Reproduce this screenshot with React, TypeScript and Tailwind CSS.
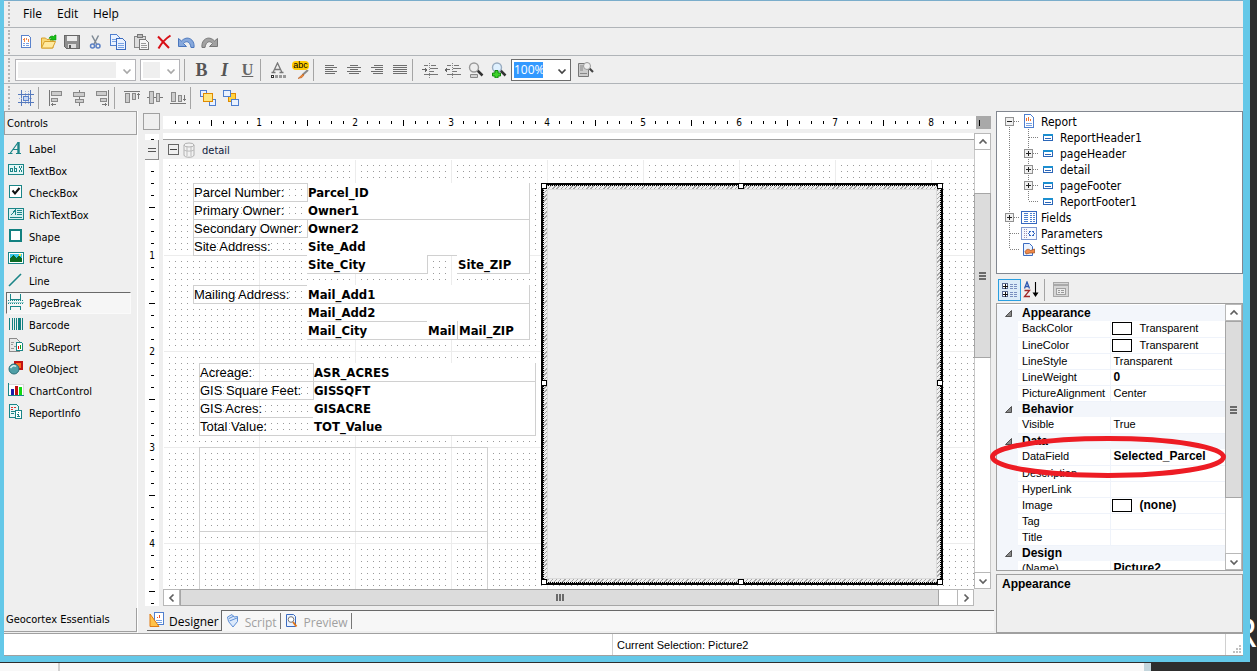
import { clsx } from "clsx";
import type { ReactNode } from "react";

/* ---------- small drawing helpers ---------- */

function Svg({ children, w = 16, h = 16 }: { children: ReactNode; w?: number; h?: number }) {
  return (
    <svg width={w} height={h} viewBox={`0 0 ${w} ${h}`} fill="none" className="shrink-0" shapeRendering="crispEdges" aria-hidden="true">
      {children}
    </svg>
  );
}

function Chevron({ dir, className }: { dir: "up" | "down" | "left" | "right"; className?: string }) {
  const d = {
    up: "M1.5 6.5 5 3l3.5 3.5",
    down: "M1.5 3.5 5 7l3.5-3.5",
    left: "M6.5 1.5 3 5l3.5 3.5",
    right: "M3.5 1.5 7 5 3.5 8.5",
  }[dir];
  return (
    <svg width="10" height="10" viewBox="0 0 10 10" fill="none" stroke="currentColor" strokeWidth="1.7" className={className} aria-hidden="true">
      <path d={d} />
    </svg>
  );
}

const icons = {
  newDoc: (
    <Svg>
      <path d="M3.5 1.5h7l2 2v10h-9z" fill="#fff" stroke="#5b83cc" />
      <path d="M5 5.500h2M6.500 4v4M8.500 4v2M10.500 5v3" stroke="#f0864a" />
      <path d="M5 9.5h2M8 9.5h3M5 11.5h2M8 11.5h3" stroke="#7aa0e0" />
    </Svg>
  ),
  open: (
    <svg width="18" height="16" viewBox="0 0 18 16" aria-hidden="true">
      <path d="M1.5 14V4h4l1.500 1.500h6V14z" fill="#f8d878" stroke="#d8a12c" />
      <path d="M1.500 14 4.500 7.500h11L12.500 14z" fill="#ffeaa0" stroke="#d8a12c" />
      <path d="M9 4.500C10 2 12 1.500 13.500 2.500L15 1h1v5h-6l1.800-1.500C11 4 10 4 9 4.500z" fill="#18c018" stroke="#0a8f0a" strokeWidth=".6" />
    </svg>
  ),
  save: (
    <Svg>
      <path d="M.5 1.500h15v13h-13l-2-2z" fill="#8e8e8e" stroke="#666" />
      <path d="M3 2h10v5H3z" fill="#ececec" />
      <path d="M4 10h8v4H4z" fill="#ddd" />
      <path d="M5 11h2v3H5z" fill="#555" />
    </Svg>
  ),
  cut: (
    <svg width="16" height="16" viewBox="0 0 16 16" fill="none" aria-hidden="true">
      <path d="M5 1.500 9.500 10M11.500 1.500 7 10" stroke="#7d8894" strokeWidth="1.500" />
      <circle cx="5.500" cy="12" r="2" stroke="#5b80c4" strokeWidth="1.500" />
      <circle cx="11" cy="12" r="2" stroke="#5b80c4" strokeWidth="1.500" />
    </svg>
  ),
  copy: (
    <Svg>
      <path d="M.5.5h6l3 3v8h-9z" fill="#eaf2ff" stroke="#4f7fcf" />
      <path d="M6.500 4.500h6l3 3v8h-9z" fill="#eaf2ff" stroke="#3b6bc0" />
      <path d="M2 5.500h4M2 7.500h4M8 9.500h6M8 11.500h6M8 13.500h6" stroke="#7aa3e4" />
    </Svg>
  ),
  paste: (
    <Svg>
      <path d="M1.500 2.500h11v11h-11z" fill="#ddd" stroke="#888" />
      <path d="M4.500.5h5v3h-5z" fill="#bbb" stroke="#777" />
      <path d="M6.500 5.500h6l3 3v7h-9z" fill="#f6f6f6" stroke="#777" />
      <path d="M8 9.500h5M8 11.500h6M8 13.500h6" stroke="#999" />
    </Svg>
  ),
  remove: (
    <svg width="16" height="16" viewBox="0 0 16 16" aria-hidden="true">
      <path d="M2 2.500 13 14M14.500 1.500C9 5 5 10 2.500 14.500" stroke="#d80f16" strokeWidth="2" fill="none" />
    </svg>
  ),
  undo: (
    <svg width="17" height="14" viewBox="0 0 17 14" aria-hidden="true">
      <path d="M.5 3.500v8h8L5.500 8.500C8 5.500 12 6 13 12.500h3C17 4 9 0 3.500 6z" fill="#86a8dc" stroke="#4a76bd" />
    </svg>
  ),
  redo: (
    <svg width="17" height="14" viewBox="0 0 17 14" aria-hidden="true">
      <path d="M16.500 3.500v8h-8l3-3C9 5.500 5 6 4 12.500H1C0 4 8 0 13.500 6z" fill="#a2a2a2" stroke="#777" />
    </svg>
  ),
  fontColor: (
    <Svg w={18} h={16}>
      <path d="M4 10.500 8.500 1 13 10.500M6 7.500h5M2.500 10.500h4M10.500 10.500h4" stroke="#777" strokeWidth="1.300" shapeRendering="auto" />
      <path d="M2.500 13.500h2v2h-2z" fill="#fff" stroke="#333" />
      <path d="M6 13h3v3H6zM10 13h3v3h-3zM14 13h3v3h-3z" fill="#999" />
    </Svg>
  ),
  alignLeft: <Svg><path d="M2 3.500h9M2 5.500h12M2 7.500h8M2 9.500h12M2 11.500h10" stroke="#6e6e6e" /></Svg>,
  alignCenter: <Svg><path d="M4 3.500h8M1 5.500h14M4 7.500h8M1 9.500h14M3 11.500h10" stroke="#6e6e6e" /></Svg>,
  alignRight: <Svg><path d="M5 3.500h9M2 5.500h12M6 7.500h8M2 9.500h12M4 11.500h10" stroke="#6e6e6e" /></Svg>,
  justify: <Svg><path d="M1 3.500h14M1 5.500h14M1 7.500h14M1 9.500h14M1 11.500h14" stroke="#6e6e6e" /></Svg>,
  indent: (
    <Svg>
      <path d="M7.500 1v15" stroke="#888" strokeDasharray="1 1" />
      <path d="M9 3.500h5M8 6.500h8M8 9.500h4M2 12.500h14M2 3.500h4" stroke="#777" />
      <path d="M0 7.500h5M3.500 5.500v4M4.500 6.500v2" stroke="#666" />
    </Svg>
  ),
  outdent: (
    <Svg>
      <path d="M7.500 1v15" stroke="#888" strokeDasharray="1 1" />
      <path d="M9 3.500h5M8 6.500h8M8 9.500h4M2 12.500h14M2 3.500h4" stroke="#777" />
      <path d="M0 7.500h5M1.500 5.500v4M.5 6.500v2" stroke="#666" />
    </Svg>
  ),
  zoomOut: (
    <svg width="17" height="16" viewBox="0 0 17 16" fill="none" aria-hidden="true">
      <path d="m10 8 5.500 5.500" stroke="#333" strokeWidth="2.500" />
      <circle cx="7" cy="5.500" r="4.500" fill="#eee" stroke="#9a9a9a" strokeWidth="1.400" />
      <path d="M3.500 12.500h7v3h-7z" fill="#d5d5d5" stroke="#888" />
    </svg>
  ),
  zoomIn: (
    <svg width="17" height="16" viewBox="0 0 17 16" fill="none" aria-hidden="true">
      <path d="m10 8 5.500 5.500" stroke="#333" strokeWidth="2.500" />
      <circle cx="7" cy="5.500" r="4.500" fill="#dff1ff" stroke="#9aacc0" strokeWidth="1.400" />
      <path d="M5 8.500h3v2.500h2.500v3H8V16H5v-2H2.500v-3H5z" fill="#3ed32a" stroke="#118a0c" />
    </svg>
  ),
  preview: (
    <svg width="16" height="16" viewBox="0 0 16 16" fill="none" aria-hidden="true">
      <path d="M.5 1.500h10v13H.5z" fill="#ccc" stroke="#777" />
      <path d="M2 4h3M2 6h3M2 8h3M2 11.500h7" stroke="#888" />
      <path d="m11 6 4 4" stroke="#444" strokeWidth="2.200" />
      <circle cx="9" cy="4" r="3.500" fill="#eee" stroke="#999" />
    </svg>
  ),
  snapGrid: (
    <Svg>
      <path d="M3.500 0v16M12.500 0v16M0 4.500h16M0 12.500h16" stroke="#5579bd" />
      <path d="M7.500 1v14M10.500 1v14M1 8.500h14" stroke="#9db2dc" strokeDasharray="1 1" />
      <path d="M5.500 6.500h5v4h-5z" fill="#c5d6f4" stroke="#5b83cc" />
    </Svg>
  ),
  alLefts: (
    <Svg>
      <path d="M1.500 0v16M3 14.500h5M4.500 13v3" stroke="#777" />
      <path d="M3.500 1.500h10v4h-10zM3.500 8.500h6v3h-6z" fill="#ccc" stroke="#8a8a8a" />
    </Svg>
  ),
  alCenters: (
    <Svg>
      <path d="M8.500 0v16" stroke="#777" />
      <path d="M2.500 2.500h11v4h-11zM4.500 9.500h8v3h-8z" fill="#ccc" stroke="#8a8a8a" />
    </Svg>
  ),
  alRights: (
    <Svg>
      <path d="M14.500 0v16M8 14.500h5M11.500 13v3" stroke="#777" />
      <path d="M2.500 1.500h10v4h-10zM6.500 8.500h6v3h-6z" fill="#ccc" stroke="#8a8a8a" />
    </Svg>
  ),
  alTops: (
    <Svg>
      <path d="M0 1.500h16M14.500 3v6M13 4.500h3" stroke="#777" />
      <path d="M1.500 3.500h4v9h-4zM8.500 3.500h3v6h-3z" fill="#ccc" stroke="#8a8a8a" />
    </Svg>
  ),
  alMiddles: (
    <Svg>
      <path d="M0 7.500h16" stroke="#777" />
      <path d="M2.500 1.500h4v12h-4zM9.500 3.500h3v8h-3z" fill="#ccc" stroke="#8a8a8a" />
    </Svg>
  ),
  alBottoms: (
    <Svg>
      <path d="M0 13.500h16M14.500 5v6M13 9.500h3" stroke="#777" />
      <path d="M1.500 2.500h4v9h-4zM8.500 5.500h3v6h-3z" fill="#ccc" stroke="#8a8a8a" />
    </Svg>
  ),
  toFront: (
    <Svg>
      <path d="M.5.5h6v6h-6zM9.500 9.500h6v6h-6z" fill="#eaf2ff" stroke="#4f7fcf" />
      <path d="M3.500 3.500h9v8h-9z" fill="#ffe680" stroke="#e08a00" />
    </Svg>
  ),
  toBack: (
    <Svg>
      <path d="M5.500 3.500h7v8h-7z" fill="#ffd23f" stroke="#e08a00" />
      <path d="M.5.5h7v6h-7zM8.500 9.500h7v6h-7z" fill="#eaf2ff" stroke="#4f7fcf" />
    </Svg>
  ),
};

const toolIcons = {
  label: (
    <svg width="16" height="14" viewBox="0 0 16 14" fill="none" stroke="#1a8587" aria-hidden="true">
      <path d="M2 12.500 10 1.500M5 8.500h5" strokeWidth="1.200" />
      <path d="M10.500 1v11.500" strokeWidth="2.400" />
      <path d="M0 12.500h4.500M8 12.500h5" strokeWidth="1.200" />
    </svg>
  ),
  textBox: (
    <Svg>
      <path d="M.5 2.500h15v10H.5z" fill="#e4f6f6" stroke="#1a8587" />
      <path d="M2.500 6v4M2 6.500h2.500M4.500 6v4M2 9.500h2M6.500 4v6M6 9.500h3M6 6.500h3M8.500 6v4M11 4l3 6M14 4l-3 6" stroke="#1a8587" />
    </Svg>
  ),
  checkBox: (
    <Svg>
      <path d="M1.500 1.500h12v12h-12z" fill="#fff" stroke="#1a8587" />
      <path d="m4.500 6.500 2.500 3L11.500 4" stroke="#111" strokeWidth="2" shapeRendering="auto" />
    </Svg>
  ),
  richText: (
    <Svg>
      <path d="M.5 2.500h15v11H.5z" fill="#d9f0f0" stroke="#1a8587" />
      <path d="M3 9 7.500 4v5M9 4.500h5M9 6.500h5M9 8.500h5M2 11.500h12" stroke="#1a8587" />
    </Svg>
  ),
  shape: <Svg><path d="M2 2h11v11H2z" fill="#fff" stroke="#128080" strokeWidth="2" /></Svg>,
  picture: (
    <Svg>
      <path d="M.5 2.500h15v11H.5z" fill="#fff" stroke="#1a8587" />
      <path d="M2 4h12v8H2z" fill="#39c6e8" />
      <path d="M2 12V8l3-3 3 3 3-2 3 3v3z" fill="#0c6a22" />
      <path d="M11 4h2v2h-2z" fill="#ffe93b" />
    </Svg>
  ),
  line: (
    <svg width="16" height="16" viewBox="0 0 16 16" aria-hidden="true">
      <path d="M1 14 13 2" stroke="#1a8587" strokeWidth="1.600" />
    </svg>
  ),
  pageBreak: (
    <Svg>
      <path d="M2.500 0v5h10V0M2.500 16v-4h10v4" stroke="#1a8587" />
      <path d="M0 6.500h16M0 9.500h16" stroke="#1a8587" strokeDasharray="1 1" />
      <path d="M0 8h16" stroke="#9fd4d4" strokeWidth="1" />
    </Svg>
  ),
  barcode: <Svg><path d="M1.500 2v12M4.500 2v12M6.500 2v12M8.500 2v12M14.500 2v12" stroke="#128080" /><path d="M10 2h3v12h-3z" fill="#128080" /></Svg>,
  subReport: (
    <Svg>
      <path d="M1.500.5h7l3 3v10h-10z" fill="#e8e8e8" stroke="#8a8a8a" />
      <path d="M3 4h3M3 6h2M6 8h2M3 10h3" stroke="#999" />
      <path d="M8.500 4.500h5l1 1v7h-6z" fill="#fff" stroke="#1a8587" />
      <path d="M10 8h1v3h-1z" fill="#e00" /><path d="M12 7h1v4h-1z" fill="#16a016" />
    </Svg>
  ),
  ole: (
    <svg width="16" height="16" viewBox="0 0 16 16" aria-hidden="true">
      <path d="M6 1h9v9H6z" fill="#c21212" />
      <path d="M8 3h5v5H8z" fill="#ff6a1a" />
      <circle cx="6" cy="9" r="5" fill="#4f9fa6" stroke="#286f78" />
      <path d="M2.500 8C4 5.500 6.500 5 8 6.500" stroke="#d8f0f0" strokeWidth="1.500" fill="none" />
    </svg>
  ),
  chart: (
    <Svg>
      <path d="M.5 2.500h15v11H.5z" fill="#fff" stroke="#d8d8d8" />
      <path d="M.5 1v13M0 13.500h16" stroke="#1a8587" />
      <path d="M3 7h3v6H3z" fill="#1b1ba8" /><path d="M7 4h3v9H7z" fill="#c01010" /><path d="M11 5h3v8h-3z" fill="#12d812" />
    </Svg>
  ),
  info: (
    <Svg>
      <path d="M1.500.5h7l2 2v11h-9z" fill="#e7f6f6" stroke="#1a8587" />
      <path d="M3 3h2M6 3h2M3 5h2" stroke="#e03030" />
      <path d="M3 7.500h4M3 9.500h3" stroke="#1a8587" />
      <path d="M7.500 6.500h6v8h-6z" fill="#fff" stroke="#1a8587" />
      <path d="M10.500 8v1M9 10.500h2M10.500 10v3M9 12.500h3" stroke="#1a8587" />
    </Svg>
  ),
};

const designerIcon = (
  <Svg>
    <path d="M5.500.5h9v12h-9z" fill="#fff" stroke="#4f7fcf" />
    <path d="M8 5h1M10.500 3v3" stroke="#e8502a" /><path d="M7 8.500h6M7 10.500h6" stroke="#7aa3e4" />
    <path d="M1 2v12.500h9z" fill="#ffc24a" stroke="#e07a10" shapeRendering="auto" />
  </Svg>
);

const scriptIcon = (
  <svg width="14" height="16" viewBox="0 0 14 16" aria-hidden="true">
    <path d="M1.500 4 6 1.500 8 4l3.500-.5v5L7 14 2.500 8.500z" fill="#dbe9fb" stroke="#5f8fd6" />
    <path d="M3 5.500 8 3M3.500 8 11 5" stroke="#5f8fd6" fill="none" />
  </svg>
);

const previewTabIcon = (
  <svg width="14" height="16" viewBox="0 0 14 16" fill="none" aria-hidden="true">
    <path d="M1.500 1.500h7l2 2v10h-9z" fill="#eaf2ff" stroke="#3b6bc0" />
    <circle cx="6" cy="6.500" r="2.800" fill="#fff" stroke="#777" />
    <path d="m8 9 3.500 4.500" stroke="#e0761a" strokeWidth="2" />
  </svg>
);

const bandIcon = (
  <Svg w={10} h={7}>
    <path d="M.5.5h9v6h-9z" fill="#fff" stroke="#2b66b8" />
    <path d="M0 0h10v2H0z" fill="#1c8fd0" /><path d="M2 4.500h6" stroke="#2b66b8" />
  </Svg>
);

const reportIcon = (
  <Svg w={12} h={14}>
    <path d="M1.500.5h6l3 3v10h-9z" fill="#fff" stroke="#4f7fcf" />
    <path d="M3.500 4v3M5.500 3v4M7.500 5v2" stroke="#f0702a" /><path d="M3 9.500h6M3 11.500h6" stroke="#7aa3e4" />
  </Svg>
);

const fieldsIcon = (
  <Svg w={16} h={13}>
    <path d="M.5.5h15v12H.5z" fill="#fff" stroke="#3667c0" />
    <path d="M3.500 2v9M6 2v9M10 2v9M12.500 2v9" stroke="#4f7fcf" strokeWidth="2" strokeDasharray="1 1" />
  </Svg>
);

const paramsIcon = (
  <Svg w={16} h={13}>
    <path d="M.5.5h15v12H.5z" fill="#f6f9ff" stroke="#7f97cf" />
    <path d="M3 2v9M5.500 2v9" stroke="#9a8fb4" strokeDasharray="1 1" />
    <path d="M9.500 4 7.500 6.500 9.500 9M11.500 4l2 2.500-2 2.500" stroke="#3667c0" />
  </Svg>
);

const settingsIcon = (
  <svg width="13" height="13" viewBox="0 0 13 13" fill="none" aria-hidden="true">
    <path d="M1.500.5h6l3 3v9h-9z" fill="#eaf2ff" stroke="#3b6bc0" />
    <path d="M3 8.500C5 5.500 7 6 8.500 7.500L12.500 6v4H8L4 11z" fill="#f08a4a" stroke="#9c4a1c" strokeWidth=".7" />
  </svg>
);

/* ---------- toolbars ---------- */

function Sep() {
  return <div className="ml-px mr-[5px] h-[22px] w-px shrink-0 bg-[#a5a5a5]" />;
}

function ToolButton({ label, children }: { label: string; children: ReactNode }) {
  return (
    <button aria-label={label} className="flex h-[22px] w-[23px] shrink-0 items-center justify-center hover:bg-[#d8e8f8]">
      {children}
    </button>
  );
}

function Toolbar({ label, last, children }: { label: string; last?: boolean; children: ReactNode }) {
  return (
    <div role="toolbar" aria-label={label} className={clsx("flex h-7 items-center pl-1", !last && "border-b border-[#b0b4b8]")}>
      <div className="mr-1 h-6 shrink-0 border-l-2 border-dotted border-[#b4b4b4]" />
      {children}
    </div>
  );
}

function DisabledCombo({ label, className }: { label: string; className: string }) {
  return (
    <div className={clsx("relative h-[22px] shrink-0 border border-[#b4b4b8] bg-white", className)}>
      <select aria-label={label} disabled className="block h-full w-full appearance-none bg-[#efefef] bg-clip-content py-0.5 pl-0.5 pr-[19px] opacity-100">
        <option></option>
      </select>
      <Chevron dir="down" className="pointer-events-none absolute right-[3px] top-[6px] text-[#a8a8a8]" />
    </div>
  );
}

/* ---------- left toolbox ---------- */

const tools: { name: string; icon: ReactNode; active?: boolean }[] = [
  { name: "Label", icon: toolIcons.label },
  { name: "TextBox", icon: toolIcons.textBox },
  { name: "CheckBox", icon: toolIcons.checkBox },
  { name: "RichTextBox", icon: toolIcons.richText },
  { name: "Shape", icon: toolIcons.shape },
  { name: "Picture", icon: toolIcons.picture },
  { name: "Line", icon: toolIcons.line },
  { name: "PageBreak", icon: toolIcons.pageBreak, active: true },
  { name: "Barcode", icon: toolIcons.barcode },
  { name: "SubReport", icon: toolIcons.subReport },
  { name: "OleObject", icon: toolIcons.ole },
  { name: "ChartControl", icon: toolIcons.chart },
  { name: "ReportInfo", icon: toolIcons.info },
];

function Toolbox() {
  return (
    <aside className="flex w-[134px] shrink-0 flex-col border-r border-white">
      <button className="h-6 shrink-0 border border-[#a0a0a0] pl-0.5 pt-0.5 text-left text-[11px]">Controls</button>
      <div className="flex flex-1 flex-col pt-[3px]">
        {tools.map((t) => (
          <button
            key={t.name}
            className={clsx(
              "ml-0.5 mr-[6px] flex h-[22px] items-center gap-[5px] border pl-px text-[11px] leading-4",
              t.active ? "border-[#fafafa] border-l-[#696969] border-t-[#696969] bg-[#f6f6f6]" : "border-transparent"
            )}
          >
            <span className="flex w-4 shrink-0 justify-center pb-0.5">{t.icon}</span>
            <span className="pt-0.5">{t.name}</span>
          </button>
        ))}
      </div>
      <button className="mb-px h-6 shrink-0 border-b border-r border-[#a0a0a0] pl-0.5 pt-0.5 text-left text-[11px]">Geocortex Essentials</button>
    </aside>
  );
}

/* ---------- rulers, one tick every 12px, 96px per inch ---------- */

function HorizontalRuler() {
  return (
    <div className="flex h-[13px] w-[813px] items-center bg-white pl-[6px] text-[10px] leading-3">
      {Array.from({ length: 68 }, (_, i) => i + 1).map((k) => (
        <div key={k} className="flex w-3 shrink-0 justify-center">
          {k % 8 === 0 ? <span className="pt-px">{k / 8}</span> : <i className={clsx("block w-px bg-black", k % 4 === 0 ? "h-[6px]" : "h-[3px]")} />}
        </div>
      ))}
    </div>
  );
}

function VerticalRuler() {
  return (
    <div className="h-full overflow-hidden bg-white">
      <div className="h-[6px] px-[6px] pt-[5px]"><i className="block h-px w-[3px] bg-black" /></div>
      <button aria-label="Resize band" className="flex h-5 w-full flex-col items-center justify-center gap-0.5 border-b border-r border-[#8c8c8c] bg-[#efefef]">
        <i className="block h-px w-2 bg-[#555]" />
        <i className="block h-px w-2 bg-[#555]" />
      </button>
      <div className="pt-[5px] text-[10px]">
        {Array.from({ length: 38 }, (_, i) => i + 1).map((k) => (
          <div key={k} className="flex h-3 items-center justify-center leading-3">
            {k % 8 === 0 ? <span className="pt-0.5">{k / 8}</span> : <i className={clsx("block h-px bg-black", k % 4 === 0 ? "w-[6px]" : "w-[3px]")} />}
          </div>
        ))}
      </div>
    </div>
  );
}

/* ---------- report items placed on the detail band ---------- */

const captions = [
  { text: "Parcel Number:", box: "left-[30px] top-[24px] w-[115px]" },
  { text: "Primary Owner:", box: "left-[30px] top-[42px] w-[114px] border-r-0" },
  { text: "Secondary Owner:", box: "left-[30px] top-[60px] w-[115px]" },
  { text: "Site Address:", box: "left-[30px] top-[78px] w-[114px] border-r-0" },
  { text: "Mailing Address:", box: "left-[30px] top-[126px] w-[114px] border-r-0" },
  { text: "Acreage:", box: "left-[36px] top-[204px] w-[115px]" },
  { text: "GIS Square Feet:", box: "left-[36px] top-[222px] w-[115px]" },
  { text: "GIS Acres:", box: "left-[36px] top-[240px] w-[114px] border-r-0" },
  { text: "Total Value:", box: "left-[36px] top-[258px] w-[114px] border-r-0" },
];

const values = [
  { text: "Parcel_ID", box: "left-[144px] top-[24px] w-[223px] border-r" },
  { text: "Owner1", box: "left-[144px] top-[42px] w-[223px] border-r border-b" },
  { text: "Owner2", box: "left-[144px] top-[60px] w-[223px] border-r" },
  { text: "Site_Add", box: "left-[144px] top-[78px] w-[223px] border-r" },
  { text: "Site_City", box: "left-[144px] top-[96px] w-[121px] border-r border-b" },
  { text: "Site_ZIP", box: "left-[294px] top-[96px] w-[73px] border-r border-b" },
  { text: "Mail_Add1", box: "left-[144px] top-[126px] w-[223px] border-r border-b" },
  { text: "Mail_Add2", box: "left-[144px] top-[144px] w-[223px] border-r" },
  { text: "Mail_City", box: "left-[144px] top-[162px] w-[120px] border-b" },
  { text: "Mail", box: "left-[264px] top-[162px] w-[31px] border-r border-b" },
  { text: "Mail_ZIP", box: "left-[295px] top-[162px] w-[72px] border-r border-b" },
  { text: "ASR_ACRES", box: "left-[150px] top-[204px] w-[223px] border-r border-b" },
  { text: "GISSQFT", box: "left-[150px] top-[222px] w-[223px] border-r" },
  { text: "GISACRE", box: "left-[150px] top-[240px] w-[223px] border-r" },
  { text: "TOT_Value", box: "left-[150px] top-[258px] w-[223px] border-r border-b" },
];

// lines and empty boxes that carry no text
const frames = [
  "left-[264px] top-[96px] h-[18px] w-[30px] border-l border-t",
  "left-[144px] top-[162px] h-px w-[120px] border-t",
  "left-[150px] top-[222px] h-px w-[223px] border-t",
  "left-[144px] top-[60px] h-px w-[223px] border-t",
  "left-[144px] top-[144px] h-px w-[223px] border-t",
  "left-[36px] top-[288px] h-[85px] w-[289px] border",
  "left-[36px] top-[372px] h-[85px] w-[289px] border",
];

const handles = [
  "left-0 top-0",
  "left-[197px] top-0",
  "right-0 top-0",
  "left-0 top-[197px]",
  "right-0 top-[197px]",
  "left-0 bottom-0",
  "left-[197px] bottom-0",
  "right-0 bottom-0",
];

function GridBackground() {
  return (
    <svg className="absolute inset-0 h-full w-full" shapeRendering="crispEdges" aria-hidden="true">
      <defs>
        <pattern id="dots" width="6" height="6" patternUnits="userSpaceOnUse">
          <rect width="1" height="1" fill="#9a9a9a" />
        </pattern>
        <pattern id="inches" width="96" height="96" patternUnits="userSpaceOnUse">
          <path d="M0 0h96v1H1v95H0z" fill="#ececec" />
        </pattern>
      </defs>
      <rect x="1" y="1" width="100%" height="100%" fill="url(#dots)" />
      <rect x="1" y="1" width="100%" height="100%" fill="url(#inches)" />
    </svg>
  );
}

function DetailBand() {
  return (
    <div className="relative min-h-0 flex-1 overflow-hidden bg-white">
      <GridBackground />
      {values.map((v) => (
        <div key={v.text} className={clsx("absolute h-[19px] border-[#d0d0d0] bg-white pl-px font-['DejaVu_Sans_Condensed','Noto_Sans',sans-serif] text-[13px] font-bold leading-5", v.box)}>
          {v.text}
        </div>
      ))}
      {captions.map((c) => (
        <div key={c.text} className={clsx("absolute h-[19px] whitespace-nowrap border border-[#d0d0d0] font-['Liberation_Sans',sans-serif] text-[13px] leading-[18px]", c.box)}>
          {c.text}
        </div>
      ))}
      {frames.map((f) => (
        <div key={f} className={clsx("absolute border-[#d0d0d0]", f)} />
      ))}

      {/* selected picture */}
      <div className="absolute left-[378px] top-[24px] h-[402px] w-[402px] border-2 border-black bg-[repeating-linear-gradient(135deg,#a8a8a8_0_1px,#efefef_1px_3px)]">
        <div className="h-full w-full border border-dotted border-black p-[3px]">
          <div className="h-full w-full border border-[#dcdcdc] bg-[#efefef]" />
        </div>
        <div className="absolute -inset-[2px]">
          {handles.map((h) => (
            <i key={h} className={clsx("absolute block size-[6px] border border-black bg-white", h)} />
          ))}
        </div>
      </div>
    </div>
  );
}

function ScrollButton({ dir, label }: { dir: "up" | "down" | "left" | "right"; label: string }) {
  return (
    <button aria-label={label} className="flex size-[17px] shrink-0 items-center justify-center border border-[#b8b8b8] bg-white text-[#606060]">
      <Chevron dir={dir} />
    </button>
  );
}

function ThumbGrip({ vertical }: { vertical?: boolean }) {
  return (
    <span className={clsx("flex gap-px", vertical && "flex-col")}>
      {[0, 1, 2].map((i) => (
        <i key={i} className={clsx("block bg-[#6a6a6a]", vertical ? "h-0.5 w-[7px]" : "h-[7px] w-0.5")} />
      ))}
    </span>
  );
}

function Designer() {
  return (
    <section className="flex min-w-0 flex-1 flex-col pl-[5px] pr-0.5">
      <div className="flex min-h-0 flex-1">
        <div className="flex w-[20px] shrink-0 flex-col">
          <button aria-label="Select report" className="mt-0.5 h-[17px] w-[17px] shrink-0 border border-[#a0a0a0]" />
          <div className="ml-0.5 mr-1 mt-1 min-h-0 flex-1">
            <VerticalRuler />
          </div>
        </div>
        <div className="flex min-w-0 flex-1 flex-col pr-[3px]">
          <div className="mb-1 mt-[5px] overflow-hidden bg-[#a9a9a9]">
            <HorizontalRuler />
          </div>
          <div className="flex min-h-0 flex-1">
            <div className="flex min-w-0 flex-1 flex-col">
              <div className="h-[6px] shrink-0 bg-white" />
              <div className="flex h-5 shrink-0 items-center border-t border-[#a0a0a0] pl-[5px] text-[11px] leading-4 text-[#10203c]">
                <button aria-label="Collapse detail" className="flex size-[11px] items-center justify-center border border-[#666]">
                  <i className="block h-px w-[7px] bg-[#444]" />
                </button>
                <svg width="16" height="16" viewBox="0 0 16 16" fill="#f2f2f2" stroke="#b0b0b0" className="ml-0.5 mr-[5px]" aria-hidden="true">
                  <path d="M3 3v10c0 3 10 3 10 0V3" />
                  <ellipse cx="8" cy="3" rx="5" ry="2" />
                  <path d="M6 5v9M10 5v9M3 8c2 1.500 8 1.500 10 0" fill="none" stroke="#bbb" />
                </svg>
                <span className="pt-0.5">detail</span>
              </div>
              <DetailBand />
            </div>
            <div className="flex w-[17px] shrink-0 flex-col border-x border-[#c8c8c8] bg-white">
              <div className="-mx-px"><ScrollButton dir="up" label="Scroll up" /></div>
              <div className="flex flex-1 flex-col pt-[43px]">
                <div className="-mx-px flex h-[165px] items-center justify-center border border-[#a6a6a6] bg-[#dcdcdc]"><ThumbGrip vertical /></div>
              </div>
              <div className="-mx-px"><ScrollButton dir="down" label="Scroll down" /></div>
            </div>
          </div>
          <div className="mr-[17px] flex h-[17px] shrink-0 border-y border-[#b8b8b8] bg-white">
            <div className="-my-px"><ScrollButton dir="left" label="Scroll left" /></div>
            <div className="-my-px flex flex-1 items-center justify-center border border-[#a6a6a6] bg-[#dcdcdc]"><ThumbGrip /></div>
            <div className="-my-px ml-[18px]"><ScrollButton dir="right" label="Scroll right" /></div>
          </div>
        </div>
      </div>

      <div role="tablist" className="mt-1 flex h-[23px] shrink-0 pb-0.5 font-['Open_Sans',sans-serif] text-[12px] leading-4">
        <button role="tab" aria-selected="true" className="ml-1 flex items-center gap-1 border-b border-r border-[#696969] pl-0.5 pr-0.5">
          {designerIcon}
          <span className="pt-1">Designer</span>
        </button>
        <div className="flex flex-1 items-center border-t border-[#696969] bg-[#f7f7f7] pl-1 text-[#a0a0a0]">
          <button role="tab" aria-selected="false" className="flex h-4 items-center gap-[5px] border-r border-[#777] pr-[3px]">
            {scriptIcon}
            <span className="pt-1">Script</span>
          </button>
          <button role="tab" aria-selected="false" className="ml-1 flex h-4 items-center gap-[5px] border-r border-[#777] pr-[3px]">
            {previewTabIcon}
            <span className="pt-1">Preview</span>
          </button>
        </div>
      </div>
    </section>
  );
}

/* ---------- report explorer ---------- */

function Joint({ up, down, right, box }: { up?: boolean; down?: boolean; right?: boolean; box?: "+" | "-" }) {
  return (
    <Svg w={19} h={16}>
      <g stroke="#808080" strokeDasharray="1 1">
        {up && <path d="M9.500 0v8" />}
        {down && <path d="M9.500 8v8" />}
        {right && <path d="M10 8.500h9" />}
      </g>
      {box && (
        <>
          <path d="M5.500 4.500h8v8h-8z" fill="#f0f0f0" stroke="#919191" />
          <path d={box === "+" ? "M7 8.500h5M9.500 6v5" : "M7 8.500h5"} stroke="#222" />
        </>
      )}
    </Svg>
  );
}

const bands = [
  { name: "ReportHeader1", open: false },
  { name: "pageHeader", open: true },
  { name: "detail", open: true },
  { name: "pageFooter", open: true },
  { name: "ReportFooter1", open: false },
];

function TreeIcon({ children }: { children: ReactNode }) {
  return <span className="flex w-[19px] shrink-0 items-center justify-center">{children}</span>;
}

function TreeText({ children }: { children: ReactNode }) {
  return <span className="pl-[3px] pt-0.5">{children}</span>;
}

function ReportTree() {
  return (
    <ul role="tree" aria-label="Report explorer" className="h-[163px] shrink-0 overflow-hidden border border-[#828790] bg-white pl-[3px] pt-px text-[12px] leading-4">
      <li role="treeitem" className="flex h-4 items-center">
        <Joint down right box="-" />
        <TreeIcon>{reportIcon}</TreeIcon>
        <TreeText>Report</TreeText>
      </li>
      {bands.map((b, i) => (
        <li key={b.name} role="treeitem" className="flex h-4 items-center">
          <Joint up down />
          <Joint up down={i < bands.length - 1} right box={b.open ? "+" : undefined} />
          <TreeIcon>{bandIcon}</TreeIcon>
          <TreeText>{b.name}</TreeText>
        </li>
      ))}
      <li role="treeitem" className="flex h-4 items-center">
        <Joint up down right box="+" />
        <TreeIcon>{fieldsIcon}</TreeIcon>
        <TreeText>Fields</TreeText>
      </li>
      <li role="treeitem" className="flex h-4 items-center">
        <Joint up down right />
        <TreeIcon>{paramsIcon}</TreeIcon>
        <TreeText>Parameters</TreeText>
      </li>
      <li role="treeitem" className="flex h-4 items-center">
        <Joint up right />
        <TreeIcon>{settingsIcon}</TreeIcon>
        <TreeText>Settings</TreeText>
      </li>
    </ul>
  );
}

/* ---------- property grid ---------- */

type Prop = { name: string; value?: string; swatch?: boolean; bold?: boolean };

const groups: { title: string; props: Prop[] }[] = [
  {
    title: "Appearance",
    props: [
      { name: "BackColor", value: "Transparent", swatch: true },
      { name: "LineColor", value: "Transparent", swatch: true },
      { name: "LineStyle", value: "Transparent" },
      { name: "LineWeight", value: "0", bold: true },
      { name: "PictureAlignment", value: "Center" },
    ],
  },
  { title: "Behavior", props: [{ name: "Visible", value: "True" }] },
  {
    title: "Data",
    props: [
      { name: "DataField", value: "Selected_Parcel", bold: true },
      { name: "Description" },
      { name: "HyperLink" },
      { name: "Image", value: "(none)", swatch: true, bold: true },
      { name: "Tag" },
      { name: "Title" },
    ],
  },
  { title: "Design", props: [{ name: "(Name)", value: "Picture2", bold: true }] },
];

function PropertyGrid() {
  return (
    <div className="relative flex min-h-0 flex-1 flex-col">
      <div className="flex min-h-0 flex-1 overflow-hidden border border-[#a0a0a0] bg-white">
        <div className="min-w-0 flex-1 overflow-hidden pt-px">
          <table className="w-full table-fixed border-collapse font-['Liberation_Sans',sans-serif] text-[11px] leading-[15px]">
            <colgroup>
              <col className="w-[21px]" />
              <col className="w-[92px]" />
              <col />
            </colgroup>
            {groups.map((g) => (
              <tbody key={g.title}>
                <tr className="h-4 bg-[#f3f6fb]">
                  <td className="p-0 pl-2">
                    <svg width="7" height="7" viewBox="0 0 7 7" aria-hidden="true"><path d="M6.500.5v6h-6z" fill="#888" stroke="#333" strokeWidth=".8" /></svg>
                  </td>
                  <th colSpan={2} className="p-0 pl-1 text-left text-[12px] font-bold">{g.title}</th>
                </tr>
                {g.props.map((p) => (
                  <tr key={p.name} className="h-4">
                    <td className="bg-[#f3f6fb] p-0" />
                    <td className="border-b border-r border-[#eff3fa] p-0 pl-1">{p.name}</td>
                    <td className="border-b border-[#eff3fa] p-0">
                      <span className={clsx("flex items-center", p.swatch ? "pl-px" : "pl-[3px]", p.bold && "text-[12px] font-bold")}>
                        {p.swatch && <i className="mr-2 block h-[13px] w-5 border border-black bg-white" />}
                        {p.value}
                      </span>
                    </td>
                  </tr>
                ))}
              </tbody>
            ))}
          </table>
        </div>
        <div className="flex w-[17px] shrink-0 flex-col border-x border-[#c8c8c8] bg-white">
          <div className="-mx-px"><ScrollButton dir="up" label="Scroll properties up" /></div>
          <div className="flex-1">
            <div className="-mx-px flex h-[177px] items-center justify-center border border-[#a6a6a6] bg-[#dcdcdc]"><ThumbGrip vertical /></div>
          </div>
          <div className="-mx-px"><ScrollButton dir="down" label="Scroll properties down" /></div>
        </div>
      </div>
      {/* hand-drawn highlight round DataField */}
      <svg width="238" height="44" viewBox="0 0 238 44" fill="none" className="pointer-events-none absolute -left-[7px] top-[132px]" aria-hidden="true">
        <ellipse cx="119" cy="22" rx="115.500" ry="18.500" stroke="#ed1c24" strokeWidth="5" />
      </svg>
    </div>
  );
}

function PropertyPanel() {
  return (
    <aside className="flex w-[247px] shrink-0 flex-col">
      <ReportTree />
      <div role="toolbar" aria-label="Property view" className="flex h-[29px] shrink-0 items-center pl-0.5 pt-[2px]">
        <button aria-label="Categorized" className="flex h-[22px] w-[23px] items-center justify-center border border-[#2a9fe0] bg-[#dcecf9]">
          <Svg w={17} h={16}>
            <path d="M1.500 1.500h5v5h-5zM1.500 9.500h5v5h-5z" fill="#fff" stroke="#5a6a90" />
            <path d="M2 4.500h5M4.500 2v5M2 12.500h5M4.500 10v5" stroke="#111" />
            <path d="M9 2.500h8M9 4.500h8M9 6.500h8M9 10.500h8M9 12.500h8M9 14.500h8" stroke="#7a8fc0" strokeDasharray="3 1" />
          </Svg>
        </button>
        <button aria-label="Alphabetical" className="flex h-[22px] w-5 items-center justify-center">
          <svg width="16" height="17" viewBox="0 0 16 17" fill="none" aria-hidden="true">
            <path d="M1.500 7.500 4 1l2.500 6.500M2.500 5.500h3" stroke="#2d57b0" strokeWidth="1.300" />
            <path d="M1.500 9.500h5l-5 6h5.500" stroke="#a02a2a" strokeWidth="1.300" />
            <path d="M12.500 1v12M10.500 12l2 3 2-3z" stroke="#000" fill="#000" strokeWidth="1.100" />
          </svg>
        </button>
        <div className="ml-[3px] mr-1 h-[22px] w-px bg-[#a5a5a5]" />
        <button aria-label="Property pages" disabled className="flex h-[22px] w-[23px] items-center justify-center">
          <Svg>
            <path d="M.5.5h15v14H.5z" fill="#d6d6d6" stroke="#a8a8a8" />
            <path d="M1 2.500h14" stroke="#aaa" strokeWidth="2" />
            <path d="M3.500 6.500h9v6h-9z" fill="#ececec" stroke="#a0a0a0" />
            <path d="M5 8.500h2M8 8.500h3M5 10.500h2M8 10.500h3" stroke="#999" />
          </Svg>
        </button>
      </div>
      <PropertyGrid />
      <div className="mt-[3px] h-[59px] shrink-0 border border-[#a0a0a0] pl-[5px] pt-px font-['Liberation_Sans',sans-serif] text-[12px] font-bold leading-4">
        Appearance
      </div>
    </aside>
  );
}

/* ---------- page ---------- */

export default function App() {
  return (
    <div className="flex h-screen flex-col overflow-hidden bg-[#2d2d2d] font-['DejaVu_Sans_Condensed','Noto_Sans',sans-serif] text-black">
      <div className="flex min-h-0 flex-1">
        <div className="flex min-w-0 flex-1 flex-col border-b-[6px] border-l-4 border-r-[7px] border-[#64c8e8] bg-[#efefef]">
          <div className="h-px shrink-0 bg-[#7aadcb]" />
          <nav className="flex h-[27px] shrink-0 items-center border-b border-[#b0b4b8] pl-1 font-['Open_Sans',sans-serif] text-[12px]">
            <div className="h-6 border-l-2 border-dotted border-[#b4b4b4]" />
            <button className="ml-[13px] w-[34px] text-left">File</button>
            <button className="w-9 text-left">Edit</button>
            <button>Help</button>
          </nav>
          <Toolbar label="Standard">
            <ToolButton label="New">{icons.newDoc}</ToolButton>
            <ToolButton label="Open">{icons.open}</ToolButton>
            <ToolButton label="Save">{icons.save}</ToolButton>
            <ToolButton label="Cut">{icons.cut}</ToolButton>
            <ToolButton label="Copy">{icons.copy}</ToolButton>
            <ToolButton label="Paste">{icons.paste}</ToolButton>
            <ToolButton label="Delete">{icons.remove}</ToolButton>
            <ToolButton label="Undo">{icons.undo}</ToolButton>
            <ToolButton label="Redo">{icons.redo}</ToolButton>
          </Toolbar>
          <Toolbar label="Formatting">
            <DisabledCombo label="Font" className="ml-px w-[121px]" />
            <DisabledCombo label="Font size" className="ml-1 mr-[3px] w-10" />
            <Sep />
            <ToolButton label="Bold"><span className="font-['Liberation_Serif',serif] text-[18px] font-bold leading-5 text-[#555]">B</span></ToolButton>
            <ToolButton label="Italic"><span className="font-['Liberation_Serif',serif] text-[18px] font-bold italic leading-5 text-[#555]">I</span></ToolButton>
            <ToolButton label="Underline"><span className="font-['Liberation_Serif',serif] text-[16px] font-bold leading-5 text-[#666] underline">U</span></ToolButton>
            <Sep />
            <ToolButton label="Font color">{icons.fontColor}</ToolButton>
            <ToolButton label="Highlight">
              <span className="flex flex-col items-end">
                <span className="rounded-sm bg-[#ffcc00] px-px font-['Liberation_Sans',sans-serif] text-[9px] leading-[9px]">abc</span>
                <svg width="12" height="9" viewBox="0 0 12 9" aria-hidden="true">
                  <path d="M11 0 5.500 5" stroke="#888" strokeWidth="2" />
                  <path d="M6 4 1 8.500l4-1 2-2.500z" fill="#f08a3c" stroke="#b85a1a" strokeWidth=".6" />
                </svg>
              </span>
            </ToolButton>
            <Sep />
            <ToolButton label="Align left">{icons.alignLeft}</ToolButton>
            <ToolButton label="Align center">{icons.alignCenter}</ToolButton>
            <ToolButton label="Align right">{icons.alignRight}</ToolButton>
            <ToolButton label="Justify">{icons.justify}</ToolButton>
            <Sep />
            <ToolButton label="Increase indent">{icons.indent}</ToolButton>
            <ToolButton label="Decrease indent">{icons.outdent}</ToolButton>
            <ToolButton label="Zoom out">{icons.zoomOut}</ToolButton>
            <ToolButton label="Zoom in">{icons.zoomIn}</ToolButton>
            <div className="relative ml-px mr-[3px] h-[22px] w-[60px] shrink-0 border border-[#6e6e6e] bg-white">
              <select
                aria-label="Zoom"
                className="block h-full w-full appearance-none bg-[linear-gradient(90deg,#3399ff_31px,#fff_31px)] bg-clip-content px-0.5 py-0.5 font-['Open_Sans',sans-serif] text-[12px] leading-4 text-white"
              >
                <option>100%</option>
              </select>
              <Chevron dir="down" className="pointer-events-none absolute right-[3px] top-[6px] text-[#444]" />
            </div>
            <ToolButton label="Page preview">{icons.preview}</ToolButton>
          </Toolbar>
          <Toolbar label="Layout" last>
            <ToolButton label="Snap to grid">{icons.snapGrid}</ToolButton>
            <Sep />
            <ToolButton label="Align lefts">{icons.alLefts}</ToolButton>
            <ToolButton label="Align centers">{icons.alCenters}</ToolButton>
            <ToolButton label="Align rights">{icons.alRights}</ToolButton>
            <Sep />
            <ToolButton label="Align tops">{icons.alTops}</ToolButton>
            <ToolButton label="Align middles">{icons.alMiddles}</ToolButton>
            <ToolButton label="Align bottoms">{icons.alBottoms}</ToolButton>
            <Sep />
            <ToolButton label="Bring to front">{icons.toFront}</ToolButton>
            <ToolButton label="Send to back">{icons.toBack}</ToolButton>
          </Toolbar>

          <main className="-mt-px flex min-h-0 flex-1">
            <Toolbox />
            <Designer />
            <PropertyPanel />
          </main>

          <footer className="flex h-[23px] shrink-0 items-stretch border-y border-[#a0a0a0] bg-white font-['Liberation_Sans',sans-serif] text-[11px]">
            <div className="flex-1" />
            <div className="flex flex-1 items-center border-l border-[#d0d0d0] pl-1 pt-px">Current Selection: Picture2</div>
            <div className="flex w-[18px] items-end justify-end border-l border-[#d0d0d0] pb-px pr-px">
              <Svg w={9} h={9}>
                <path d="M6 0h2v2H6zM3 3h2v2H3zM6 3h2v2H6zM0 6h2v2H0zM3 6h2v2H3zM6 6h2v2H6z" fill="#c0c0c0" />
              </Svg>
            </div>
          </footer>
        </div>
        {/* sliver of the desktop behind the window */}
        <div className="relative w-[7px] shrink-0 overflow-hidden">
          <span className="absolute bottom-[8px] right-0 font-['Open_Sans',sans-serif] text-[40px] leading-[44px] text-white">R</span>
        </div>
      </div>
      <div className="flex h-[9px] shrink-0 pr-[106px] pt-px">
        <div className="w-[60px] border-r-2 border-[#d0d0d0] bg-[#f8f8f8]" />
        <div className="flex-1 border-r-[7px] border-[#c3d5dc] bg-[#f8f8f8]" />
      </div>
    </div>
  );
}
